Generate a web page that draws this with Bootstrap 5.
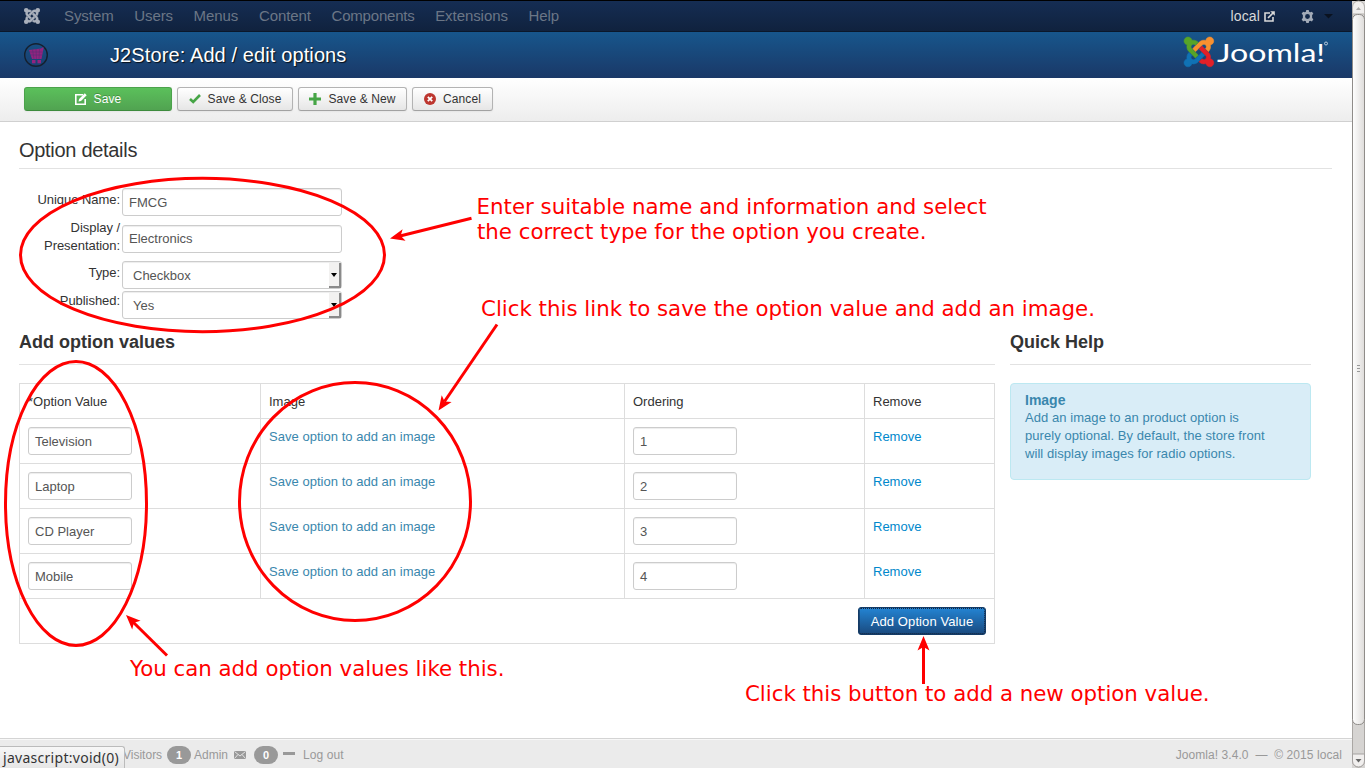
<!DOCTYPE html>
<html lang="en">
<head>
<meta charset="utf-8">
<title>J2Store: Add / edit options</title>
<link href="https://cdn.jsdelivr.net/npm/bootstrap@5.3.0/dist/css/bootstrap.min.css" rel="stylesheet">
<style>
html,body{height:768px;overflow:hidden}
body{font:13px/18px "Liberation Sans",Arial,sans-serif;color:#333;background:#fff;position:relative}
a{text-decoration:none}
.shell{width:1365px;height:768px}
.page-col{width:1352px}
.topbar{height:32px;background:linear-gradient(#152d53,#10223e);border-top:1px solid #000;border-bottom:1px solid #0b182b;padding:0 0 0 24px;font-size:15px}
.topbar .nav-link{color:#6b7686;padding:0;line-height:18px;letter-spacing:-.07px}
.topbar .navbar-nav{gap:20.6px;margin-left:24px}
.site-link{color:#d9d9d9;font-size:14px;letter-spacing:.15px}
.titlebar{height:46px;background:linear-gradient(#17568c,#1a3867);padding-left:24px}
.titlebar h1{font-size:20px;line-height:24px;color:#fff;text-shadow:1px 1px 1px rgba(0,0,0,.8);margin:0 0 0 62px;font-weight:400;letter-spacing:.11px}
.toolbar{height:44px;background:linear-gradient(#fff,#ededed);border-bottom:1px solid #d0d0d0;padding:9px 24px 0;gap:5px}
.tool{height:24px;font-size:12px;line-height:16px;padding:0;border:1px solid #b3b3b3;border-bottom-color:#a2a2a2;border-radius:3px;background:linear-gradient(#fff,#e6e6e6);color:#333;display:flex;align-items:center;justify-content:center;gap:7px;box-shadow:0 1px 2px rgba(0,0,0,.05);letter-spacing:.1px}
.tool-save{width:148px;background:linear-gradient(#5bc05b,#51a351);border-color:#4ba24b #4ba24b #3d8b3d;color:#fff;text-shadow:0 -1px 0 rgba(0,0,0,.25)}
.content{padding:16px 20px 0 19px}
.legend-line{font-size:20px;line-height:24px;height:31px;border-bottom:1px solid #e2e2e2;margin:0 0 19px;font-weight:400;width:1313px;letter-spacing:-.3px}
.frow{height:30px}
.frow label{width:101px;text-align:right;margin-right:2px;padding-top:3px;letter-spacing:-.05px}
.frow-tall{height:43px}
.frow-tall label{padding-top:1px}
.frow-tall .form-control{margin-top:7px;padding-top:4px}
.form-control,.form-select{height:28px;width:220px;font-size:13px;line-height:18px;padding:5px 6px 3px;border:1px solid #ccc;border-radius:3px;color:#555;box-shadow:inset 0 1px 1px rgba(0,0,0,.075);background-image:none}
.form-select{padding:5px 10px;position:relative}
.form-select i{position:absolute;right:0;top:1px;width:12px;height:25px;background:#f2f1f0;border-right:2px solid #8a8a8a;border-bottom:2px solid #8a8a8a}
.form-select i:after{content:"";position:absolute;left:2px;top:10px;border:3.5px solid transparent;border-top:4px solid #000;border-bottom:0}
.sub{font-size:18px;line-height:24px;height:35px;font-weight:700;border-bottom:1px solid #e2e2e2;margin:0 0 18px}
.left-col{width:976px}
.right-col{width:301px;margin-left:15px}
.table{table-layout:fixed;width:975px;margin:0;--bs-table-color:#333;border-color:#ddd;color:#333}
.table td,.table th{padding:8px;font-weight:400;line-height:18px;vertical-align:top}
.table thead tr{height:35px}
.table tbody tr{height:45px}
.table th{padding-top:9px;padding-bottom:7px}
.table .form-control{width:104px}
.table a{color:#0088cc;position:static;display:block;padding-top:1px}
.table a.img-link{color:#3a87ad;letter-spacing:.03px}
.btn-add{width:128px;height:28px;font-size:13px;line-height:18px;padding:5px 0 3px;color:#fff;border:1px solid #143b66;border-radius:3px;background:linear-gradient(#2384d3,#1a4a7f);outline:1px dotted #14233a;outline-offset:-2px;letter-spacing:.1px}
.alert-help{height:97px;background:#d9edf7;border:1px solid #bce8f1;border-radius:4px;color:#3a87ad;padding:7px 35px 8px 14px;margin:0;letter-spacing:.06px}
.alert-help h4{font-size:14px;line-height:18px;font-weight:700;margin:0;letter-spacing:0}
.status{position:absolute;left:0;top:738px;width:1352px;height:30px;background:#ebebeb;border-top:1px solid #d4d4d4;box-shadow:inset 0 1px 0 #f8f8f8;font-size:12px;color:#999;padding:2px 10px 0 123px}
.status .badge{width:24px;height:18px;border-radius:9px;background:#999;font-size:11px;line-height:18px;padding:0;color:#fff}
.hint{position:absolute;left:0;top:746px;width:125px;height:22px;background:linear-gradient(#f7f7f7,#e6e6e6);border:1px solid #bbb;border-left:0;border-bottom:0;border-radius:0 3px 0 0;color:#333;font:14px/22px "Noto Sans","Open Sans",sans-serif;letter-spacing:.28px;padding-left:3px;white-space:nowrap}
.notes{position:absolute;left:0;top:0;pointer-events:none}
.notes text{font:21.33px "DejaVu Sans",sans-serif;fill:red}
</style>
</head>
<body>
<div class="shell d-flex">
<div class="page-col">
<nav class="topbar navbar-expand d-flex align-items-center">
<svg width="16" height="16" viewBox="0 32 448 448" fill="#a9b0bc" stroke="#a9b0bc" stroke-width="10">
<defs>
<path id="j1" d="M.6 92.100C.6 58.800 27.400 32 60.400 32c30 0 54.500 21.900 59.200 50.200 32.600-7.600 67.100.6 96.500 30l-44.300 44.300c-20.500-20.500-42.600-16.300-55.400-3.500-14.300 14.300-14.300 37.900 0 52.200l99.500 99.500-44 44.300c-87.700-87.200-49.700-49.700-99.800-99.700-26.800-26.500-35-64.800-24.800-98.900C20.400 144.600.6 120.700.6 92.100z"/>
<path id="j2" d="M130.100 208.500l44.300 44.300c10-10 89.700-89.700 99.700-99.800 14.300-14.300 37.600-14.300 51.900 0 12.800 12.800 17 35-3.500 55.400l44 44.300c31.200-31.200 38.500-67.600 28.900-101.200 29.200-4.100 51.900-29.200 51.900-59.500 0-33.200-26.800-60.100-59.800-60.100-30.300 0-55.400 22.500-59.500 51.600-33.800-9.900-71.700-1.500-98.300 25.100-18.300 19.100-71.100 71.500-99.600 99.900z"/>
<path id="j3" d="M396.400 360.700c8.200-32.700-.9-68.500-26.300-93.900-11.800-12.200 5 4.700-99.500-99.700l-44.300 44.300 99.700 99.700c14.300 14.300 14.300 37.600 0 51.900-12.800 12.800-35 17-55.400-3.500l-44 44.300c27.600 30.200 68 38.800 102.700 28 5.500 27.400 29.700 48.100 58.900 48.100 33 0 59.800-26.800 59.800-60.100 0-30.200-22.500-55-51.600-59.100z"/>
<path id="j4" d="M312.100 307.600l-44-44.300c-87 86.400-50.400 50.400-99.700 99.800-14.300 14.300-37.600 14.300-51.900 0-13.100-13.400-16.900-35.300 3.200-55.400l-44-44.300c-30.200 30.200-38 65.200-29.500 98.300-26.700 6-46.200 29.900-46.200 58.200C0 453.200 26.800 480 59.800 480c28.600 0 52.500-19.800 58.600-46.700 32.700 8.200 68.500-.6 94.200-26 32.100-32 12.200-12.400 99.500-99.700z"/>
</defs>
<use href="#j1"/><use href="#j2"/><use href="#j3"/><use href="#j4"/></svg>
<div class="navbar-nav">
<a class="nav-link">System</a><a class="nav-link">Users</a><a class="nav-link">Menus</a><a class="nav-link">Content</a><a class="nav-link" style="letter-spacing:-.2px">Components</a><a class="nav-link">Extensions</a><a class="nav-link">Help</a>
</div>
<div class="d-flex align-items-center ms-auto" style="padding-right:19px">
<span class="site-link">local</span>
<svg style="margin-left:4px" width="11" height="11" viewBox="0 0 11 11" fill="none" stroke="#d9d9d9" stroke-width="1.6"><path d="M6 2H1v8h8V6M4 7l5-5"/><path d="M6.2.2h4.6v4.6z" fill="#d9d9d9" stroke="none"/></svg>
<svg style="margin-left:26px" width="13" height="13" viewBox="0 0 16 16" fill="#a3abb8"><path fill-rule="evenodd" d="M6.500 0h3l.5 2.200 1.300.7L13.500 2l1.700 2.600L13.700 6.300v3.400l1.500 1.700L13.500 14l-2.200-.9-1.300.7L9.500 16h-3L6 13.800l-1.300-.7L2.500 14 .8 11.400 2.300 9.700V6.300L.8 4.600 2.500 2l2.200.9L6 2.200zM8 5a3 3 0 100 6 3 3 0 000-6z"/></svg>
<svg style="margin-left:10px" width="9" height="5"><path d="M0 0h9L4.500 4.500z" fill="#0a1220"/></svg>
</div>
</nav>
<header class="titlebar d-flex align-items-center">
<svg width="24" height="24" viewBox="0 0 24 24"><circle cx="12" cy="12" r="11.300" fill="none" stroke="#15202f" stroke-width="1.400"/><path d="M5 7l12-1.500 1.500-1h1.200L17.500 16H8z" fill="#93237f"/><path d="M5.500 9h13M6.500 12h11.500M8.500 6.500L10 16M12 6l.5 10M15.500 6L15 16" stroke="#4d3074" stroke-width=".5"/><rect x="8" y="17" width="3.500" height="3.300" fill="#93237f"/><rect x="13.500" y="17" width="3.500" height="3.300" fill="#93237f"/></svg>
<h1>J2Store: Add / edit options</h1>
<svg class="ms-auto" style="margin-right:22px;margin-top:-6px" width="147" height="36" viewBox="0 0 147 36">
<g transform="translate(1 3) scale(.0665) translate(0 -32)" stroke-width="8">
<use href="#j2" fill="#f9912f" stroke="#f9912f"/><use href="#j1" fill="#57a427" stroke="#57a427"/><use href="#j4" fill="#1072b5" stroke="#1072b5"/><use href="#j3" fill="#e22028" stroke="#e22028"/>
</g>
<text x="34" y="27.500" font-family="Lato,sans-serif" font-weight="400" font-size="25" fill="#fff" textLength="108" lengthAdjust="spacingAndGlyphs">Joomla!</text>
<circle cx="143" cy="9.500" r="1.500" fill="none" stroke="#dbe4ee" stroke-width=".8"/>
</svg>
</header>
<div class="toolbar d-flex">
<button class="btn tool tool-save"><svg width="12" height="12" viewBox="0 0 12 12" fill="none" stroke="#fff" stroke-width="1.600"><path d="M8 1.800H.8v9.400h9.400V6"/><path d="M3.500 8.500l.6-2.500L9.800.3l1.900 1.900L6 7.900z" fill="#fff" stroke="none"/></svg>Save</button>
<button class="btn tool" style="width:116px"><svg width="12" height="10" viewBox="0 0 12 10"><path d="M1 5l3.200 3L11 1" fill="none" stroke="#46a546" stroke-width="2.600"/></svg>Save &amp; Close</button>
<button class="btn tool" style="width:109px"><svg width="12" height="12"><path d="M6 0v12M0 6h12" stroke="#46a546" stroke-width="3.200"/></svg>Save &amp; New</button>
<button class="btn tool" style="width:81px"><svg width="12" height="12" viewBox="0 0 12 12"><circle cx="6" cy="6" r="6" fill="#bd362f"/><path d="M3.800 3.800l4.400 4.400m0-4.400L3.800 8.200" stroke="#fff" stroke-width="1.800"/></svg>Cancel</button>
</div>
<main class="content">
<h2 class="legend-line">Option details</h2>
<div class="frow d-flex"><label>Unique Name:</label><div class="form-control">FMCG</div></div>
<div class="frow frow-tall d-flex"><label>Display / Presentation:</label><div class="form-control">Electronics</div></div>
<div class="frow d-flex"><label>Type:</label><div class="form-select">Checkbox<i></i></div></div>
<div class="frow d-flex"><label style="padding-top:1px">Published:</label><div class="form-select">Yes<i></i></div></div>
<div class="d-flex" style="margin-top:9px">
<section class="left-col">
<h3 class="sub">Add option values</h3>
<table class="table table-bordered">
<colgroup><col style="width:241px"><col style="width:364px"><col style="width:240px"><col style="width:130px"></colgroup>
<thead><tr><th>*Option Value</th><th>Image</th><th>Ordering</th><th>Remove</th></tr></thead>
<tbody>
<tr><td><div class="form-control">Television</div></td><td><a class="img-link">Save option to add an image</a></td><td><div class="form-control">1</div></td><td><a class="rm-link">Remove</a></td></tr>
<tr><td><div class="form-control">Laptop</div></td><td><a class="img-link">Save option to add an image</a></td><td><div class="form-control">2</div></td><td><a class="rm-link">Remove</a></td></tr>
<tr><td><div class="form-control">CD Player</div></td><td><a class="img-link">Save option to add an image</a></td><td><div class="form-control">3</div></td><td><a class="rm-link">Remove</a></td></tr>
<tr><td><div class="form-control">Mobile</div></td><td><a class="img-link">Save option to add an image</a></td><td><div class="form-control">4</div></td><td><a class="rm-link">Remove</a></td></tr>
<tr><td colspan="4"><button class="btn btn-add d-block ms-auto">Add Option Value</button></td></tr>
</tbody>
</table>
</section>
<aside class="right-col">
<h3 class="sub">Quick Help</h3>
<div class="alert alert-help"><h4>Image</h4>Add an image to an product option is purely optional. By default, the store front will display images for radio options.</div>
</aside>
</div>
</main>
</div>
<svg width="13" height="768" viewBox="0 0 13 768">
<defs><linearGradient id="th"><stop offset="0" stop-color="#fff"/><stop offset="1" stop-color="#dedcda"/></linearGradient></defs>
<rect width="13" height="768" fill="#d6d4d2"/><rect width="13" height="1"/>
<rect x=".5" y="1.500" width="12" height="765.500" rx="6" fill="#d6d4d2" stroke="#aaa7a4"/>
<path d="M.5 14V7a6 6 0 0112 0v7z" fill="#f1efee" stroke="#b5b2af"/><path d="M4 10h5L6.500 7z" fill="#aaa"/>
<rect x=".5" y="14.500" width="12" height="710" rx="5" fill="url(#th)" stroke="#8f8c89"/>
<path d="M5 365.500h3M5 368.500h3M5 371.500h3" stroke="#999"/>
<path d="M.5 754v7a6 6 0 0012 0v-7z" fill="#f1efee" stroke="#a5a2a0"/><path d="M3.500 759h6l-3 3.500z" fill="#666"/>
</svg>
</div>
<footer class="status d-flex align-items-center">
<span style="width:44px">Visitors</span><span class="badge">1</span><span style="width:40px;margin-left:3px">Admin</span>
<svg width="12" height="8" viewBox="0 0 12 8"><rect width="12" height="8" fill="#999"/><path d="M.5.5L6 5 11.500.5M.5 7.500l3.500-4M11.500 7.500L8 3.500" fill="none" stroke="#ebebeb" stroke-width=".9"/></svg>
<span class="badge" style="margin-left:8px">0</span><svg style="margin:0 8px 2px 5px" width="12" height="3"><rect width="12" height="3" fill="#999"/></svg><span style="letter-spacing:.1px">Log out</span>
<span class="ms-auto" style="letter-spacing:.07px">Joomla! 3.4.0 &nbsp;—&nbsp; © 2015 local</span>
</footer>
<div class="hint">javascript:void(0)</div>
<svg class="notes" width="1365" height="768" viewBox="0 0 1365 768">
<defs><marker id="ah" markerUnits="userSpaceOnUse" markerWidth="32" markerHeight="16" refX="0" refY="0" viewBox="-16 -8 32 16" orient="auto"><path d="M0 0L-14.500-6-11 0-14.500 6z" fill="red"/></marker></defs>
<g fill="none" stroke="red" stroke-width="3">
<ellipse cx="202.500" cy="255" rx="182" ry="76.700"/><ellipse cx="76" cy="503.500" rx="70.500" ry="142"/><ellipse cx="355" cy="501.500" rx="115.500" ry="119"/>
<path d="M471.500 218.200L400 236"/><path d="M497 324.500L444.500 401.500"/><path d="M167 655.500L133 622"/><path d="M923.500 684V646"/>
<g stroke="none"><path d="M471.500 218.200L390 238.500" marker-end="url(#ah)"/><path d="M497 324.500L438.500 410.500" marker-end="url(#ah)"/><path d="M167 655L126 615" marker-end="url(#ah)"/><path d="M923.500 684V636" marker-end="url(#ah)"/></g>
</g>
<text x="476.500" y="214" textLength="510">Enter suitable name and information and select</text>
<text x="477" y="239" textLength="449.500">the correct type for the option you create.</text>
<text x="481" y="316" textLength="614">Click this link to save the option value and add an image.</text>
<text x="130" y="676" textLength="374.500">You can add option values like this.</text>
<text x="745" y="701" textLength="464.500">Click this button to add a new option value.</text>
</svg>
<script src="https://cdn.jsdelivr.net/npm/bootstrap@5.3.0/dist/js/bootstrap.bundle.min.js"></script>
</body>
</html>
